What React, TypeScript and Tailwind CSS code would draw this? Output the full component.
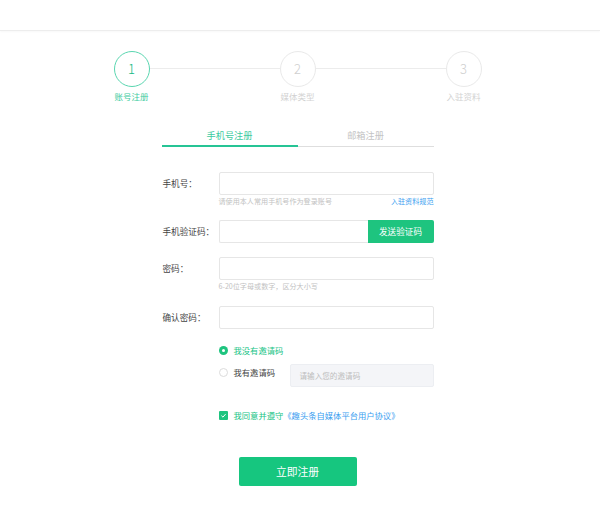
import React from 'react'

const FONT = { fontFamily: '"Noto Sans CJK SC", "Noto Sans", sans-serif' }

const STEPS = [
  { n: 1, label: '账号注册', active: true },
  { n: 2, label: '媒体类型', active: false },
  { n: 3, label: '入驻资料', active: false },
]

function Steps() {
  return (
    <div className="flex items-start">
      {STEPS.map((s, i) => (
        <React.Fragment key={s.n}>
          {i > 0 && <div className="mt-[17px] h-px w-[130px] bg-[#ececec]" />}
          <div className="flex w-[36px] flex-col items-center">
            <div
              className={`flex h-[36px] w-[36px] items-center justify-center rounded-full border text-[13px] font-light ${
                s.active ? 'border-[#5ad6b0] text-[#14b884]' : 'border-[#e9e9e9] text-[#cfcfcf]'
              }`}
            >
              {s.n}
            </div>
            <span
              className={`mt-[3px] whitespace-nowrap text-[8.5px] leading-[12px] ${
                s.active ? 'text-[#3ccba0]' : 'text-[#d2d2d2]'
              }`}
            >
              {s.label}
            </span>
          </div>
        </React.Fragment>
      ))}
    </div>
  )
}

function Label({ children }: { children: React.ReactNode }) {
  return <div className="w-[57px] shrink-0 pl-px text-[8.6px] leading-[23px] text-[#444]">{children}</div>
}

function Input({ placeholder = '' }: { placeholder?: string }) {
  return (
    <input
      className="block h-[23px] w-full rounded-[2px] border border-[#e6e6e6] bg-white px-2 text-[8px] outline-none"
      placeholder={placeholder}
      style={FONT}
    />
  )
}

export default function App() {
  return (
    <div className="min-h-[524px] w-[600px] bg-white" style={FONT}>
      {/* header */}
      <div className="h-[31px] border-b border-[#ededed] shadow-[0_1px_2px_rgba(0,0,0,0.03)]" />

      <div className="flex flex-col items-center pr-[5px]">
        <div className="mt-[20px]">
          <Steps />
        </div>

        <div className="mt-[26px] w-[272px]">
          {/* tabs */}
          <div className="flex">
            <div className="flex h-[19px] flex-1 items-start justify-center border-b-2 border-[#26c495] text-[9.2px] leading-[14px] text-[#3ccba0]">
              手机号注册
            </div>
            <div className="flex h-[19px] flex-1 items-start justify-center border-b border-[#dedede] text-[9.2px] leading-[14px] text-[#c4c4c4]">
              邮箱注册
            </div>
          </div>

          {/* 手机号 */}
          <div className="mt-[25px] flex">
            <Label>手机号：</Label>
            <div className="flex-1">
              <Input />
              <div className="mt-[1px] flex justify-between text-[7.1px] leading-[10px]">
                <span className="text-[#c2c2c2]">请使用本人常用手机号作为登录账号</span>
                <span className="text-[#3a9ef0]">入驻资料规范</span>
              </div>
            </div>
          </div>

          {/* 验证码 */}
          <div className="mt-[14px] flex">
            <Label>手机验证码：</Label>
            <div className="flex flex-1">
              <input
                className="block h-[23px] min-w-0 flex-1 rounded-l-[2px] border border-r-0 border-[#e6e6e6] px-2 text-[8px] outline-none"
                style={FONT}
              />
              <button className="h-[23px] w-[66px] rounded-r-[2px] bg-[#1ec47f] text-[8.6px] text-white" style={FONT}>
                发送验证码
              </button>
            </div>
          </div>

          {/* 密码 */}
          <div className="mt-[14px] flex">
            <Label>密码：</Label>
            <div className="flex-1">
              <Input />
              <div className="mt-[1px] text-[7.1px] leading-[10px] text-[#c2c2c2]">6-20位字母或数字，区分大小写</div>
            </div>
          </div>

          {/* 确认密码 */}
          <div className="mt-[15px] flex">
            <Label>确认密码：</Label>
            <div className="flex-1">
              <Input />
            </div>
          </div>

          {/* 邀请码 */}
          <div className="ml-[57px] mt-[15px]">
            <div className="flex items-center gap-[6px] text-[8.3px] leading-[12px] text-[#20c486]">
              <span className="flex h-[9px] w-[9px] items-center justify-center rounded-full bg-[#1ec47f]">
                <span className="h-[3px] w-[3px] rounded-full bg-white" />
              </span>
              我没有邀请码
            </div>
            <div className="mt-[8px] flex items-start">
              <div className="mt-[2px] flex w-[71px] items-center gap-[6px] text-[8.3px] leading-[12px] text-[#444]">
                <span className="h-[9px] w-[9px] rounded-full border border-[#dcdcdc]" />
                我有邀请码
              </div>
              <div className="flex h-[23px] flex-1 items-center rounded-[2px] border border-[#eceef2] bg-[#f4f5f8] px-[9px] text-[7.6px] text-[#bdbdbd]">
                请输入您的邀请码
              </div>
            </div>

            <div className="mt-[22px] flex items-center gap-[6px] text-[8.3px] leading-[12px]">
              <span className="flex h-[9px] w-[9px] items-center justify-center rounded-[1px] bg-[#1ec47f]">
                <svg viewBox="0 0 10 10" className="h-[7px] w-[7px]">
                  <path d="M2 5.2 L4.2 7.3 L8 3" fill="none" stroke="white" strokeWidth="1.4" />
                </svg>
              </span>
              <span className="text-[#20c486]">
                我同意并遵守<span className="text-[#3a9ef0]">《趣头条自媒体平台用户协议》</span>
              </span>
            </div>
          </div>

          {/* 提交 */}
          <div className="mt-[36px] flex justify-center">
            <button className="h-[29px] w-[118px] rounded-[2px] bg-[#16c67f] text-[10.8px] text-white" style={FONT}>
              立即注册
            </button>
          </div>
        </div>
      </div>
    </div>
  )
}
